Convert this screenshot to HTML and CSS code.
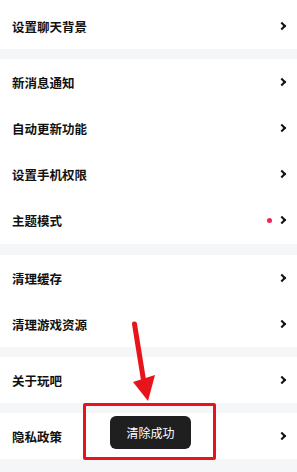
FILE: index.html
```html
<!DOCTYPE html>
<html lang="zh-CN">
<head>
<meta charset="utf-8">
<title>设置</title>
<link rel="stylesheet" href="styles.css">
</head>
<body>
<div class="page">
  <section class="group group-first">
    <div class="row"><span class="label">设置聊天背景</span><span class="chev"></span></div>
  </section>
  <section class="group group-main">
    <div class="row"><span class="label">新消息通知</span><span class="chev"></span></div>
    <div class="row"><span class="label">自动更新功能</span><span class="chev"></span></div>
    <div class="row"><span class="label">设置手机权限</span><span class="chev"></span></div>
    <div class="row"><span class="label">主题模式</span><span class="right"><span class="dot"></span><span class="chev"></span></span></div>
  </section>
  <section class="group">
    <div class="row"><span class="label">清理缓存</span><span class="chev"></span></div>
    <div class="row"><span class="label">清理游戏资源</span><span class="chev"></span></div>
  </section>
  <section class="group">
    <div class="row"><span class="label">关于玩吧</span><span class="chev"></span></div>
  </section>
  <section class="group">
    <div class="row"><span class="label">隐私政策</span><span class="chev"></span></div>
  </section>

  <div class="toast">清除成功</div>
  <div class="highlight"></div>
  <svg class="arrow" width="297" height="472" viewBox="0 0 297 472">
    <line x1="134.5" y1="324" x2="143.5" y2="380" stroke="#e8141c" stroke-width="5" stroke-linecap="round"/>
    <polygon points="133,382 155,375 148,401" fill="#e8141c"/>
  </svg>
</div>
</body>
</html>
```
FILE: styles.css
```css
* { box-sizing: border-box; }
html, body { margin: 0; padding: 0; }
body {
  background: #f5f6f8;
  font-family: "Noto Sans CJK SC", "Noto Sans", sans-serif;
  color: #111;
  width: 297px;
  height: 472px;
  overflow: hidden;
}
.page { position: relative; width: 297px; height: 472px; }
.group {
  background: #fff;
  margin-bottom: 10px;
}
.group-first { padding-top: 3px; }
.group-main { padding-bottom: 1px; margin-bottom: 11px; }
.row {
  height: 46px;
  display: flex;
  align-items: center;
  justify-content: space-between;
  padding: 0 10px 0 12px;
}
.label {
  font-size: 12.5px;
  font-weight: 700;
  letter-spacing: 0;
}
.right { display: flex; align-items: center; gap: 7px; }
.dot {
  width: 5px; height: 5px;
  border-radius: 50%;
  background: #f0245a;
}
.chev {
  width: 6px; height: 6px;
  border-top: 2px solid #111;
  border-right: 2px solid #111;
  transform: rotate(45deg);
  margin-right: 2px;
}
.toast {
  position: absolute;
  left: 110px; top: 416px;
  width: 81px; height: 33px;
  background: #1f1f1f;
  border-radius: 6px;
  color: #fff;
  font-size: 12px;
  display: flex; align-items: center; justify-content: center;
}
.highlight {
  position: absolute;
  left: 83px; top: 403px;
  width: 133px; height: 57px;
  border: 3px solid #e8141c;
  border-radius: 2px;
}
.arrow { position: absolute; left: 0; top: 0; }
```
